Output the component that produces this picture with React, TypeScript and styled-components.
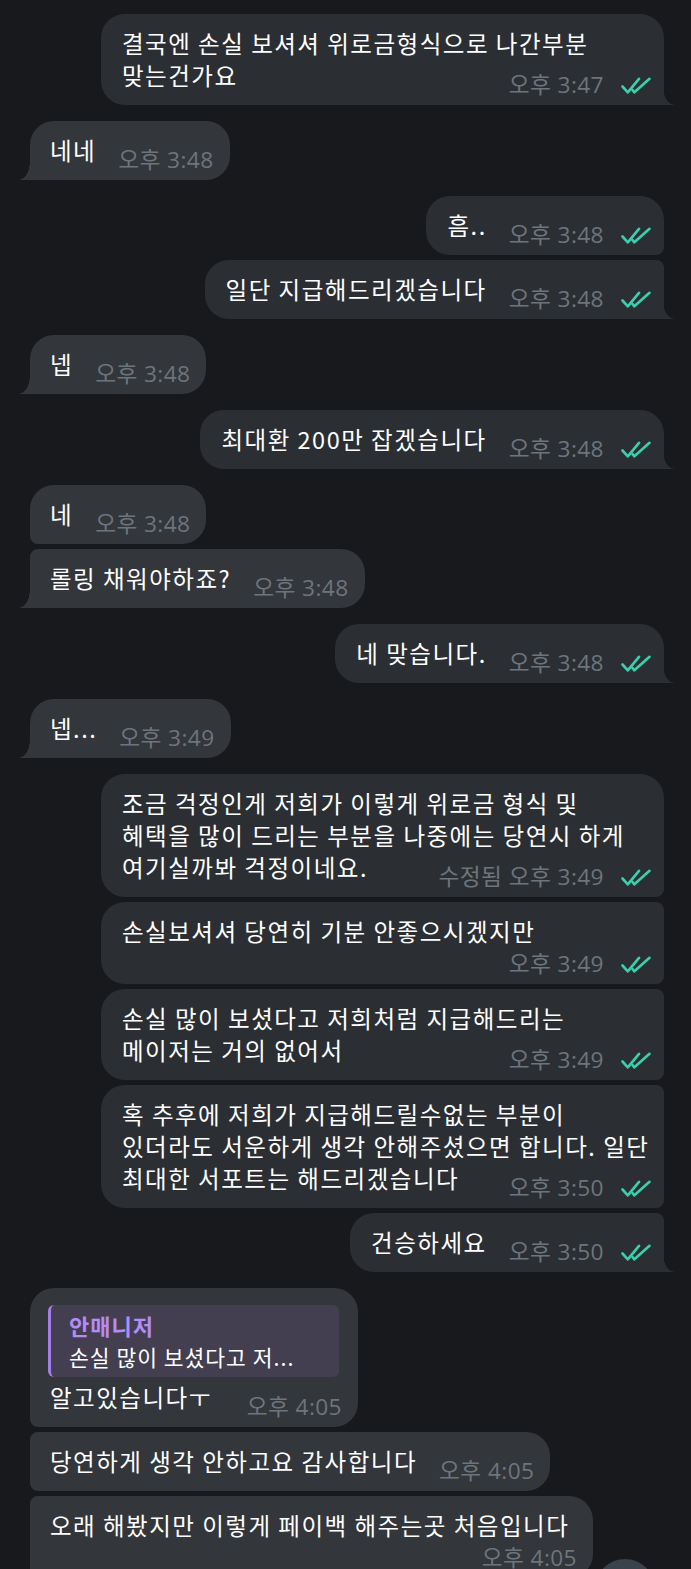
import React from "react";
import styled, { createGlobalStyle, css } from "styled-components";
import { ChevronDown } from "lucide-react";

const OUT_BG = "#2b2f33";
const IN_BG = "#33363b";
const BIG = 24;
const SMALL = 8;

const GlobalStyle = createGlobalStyle`
  html, body {
    margin: 0;
    padding: 0;
    background: #18191d;
    overflow: hidden;
  }
  body {
    font-family: "Noto Sans CJK KR", "Open Sans", sans-serif;
  }
`;

const Screen = styled.main`
  display: flex;
  flex-direction: column;
  gap: 16px;
  box-sizing: border-box;
  height: 1569px;
  overflow: hidden;
  padding: 14px 27px 0 30px;
`;

const Group = styled.section<{ $out: boolean }>`
  display: flex;
  flex-direction: column;
  gap: 5px;
  align-items: ${(p) => (p.$out ? "flex-end" : "flex-start")};
`;

type BubbleProps = {
  $out: boolean;
  $first: boolean;
  $last: boolean;
  $wide?: boolean;
  $w?: number;
};

const Bubble = styled.div<BubbleProps>`
  position: relative;
  display: flow-root;
  box-sizing: border-box;
  max-width: 563px;
  ${(p) => p.$wide && css`width: 563px;`}
  ${(p) => p.$w && css`width: ${p.$w}px;`}
  background: ${(p) => (p.$out ? OUT_BG : IN_BG)};
  padding: ${(p) => (p.$out ? "13px 13px 6px 21px" : "13px 16px 6px 20px")};
  border-radius: ${(p) =>
    p.$out
      ? `${BIG}px ${p.$first ? BIG : SMALL}px ${p.$last ? 0 : SMALL}px ${BIG}px`
      : `${p.$first ? BIG : SMALL}px ${BIG}px ${BIG}px ${p.$last ? 0 : SMALL}px`};
  color: #ffffff;
  font-family: "Noto Sans CJK KR", sans-serif;
  font-size: 23.5px;
  line-height: 32px;
  letter-spacing: 1.5px;
  word-spacing: 0;

  ${(p) =>
    p.$last &&
    css`
      &::after {
        content: "";
        position: absolute;
        bottom: 0;
        width: 11px;
        height: 18px;
        background: ${p.$out ? OUT_BG : IN_BG};
        ${p.$out
          ? css`
              right: -10px;
              -webkit-mask-image: radial-gradient(ellipse 11px 18px at 100% 0, transparent 96%, #000 100%);
              mask-image: radial-gradient(ellipse 11px 18px at 100% 0, transparent 96%, #000 100%);
            `
          : css`
              left: -11px;
              -webkit-mask-image: radial-gradient(ellipse 11px 18px at 0 0, transparent 96%, #000 100%);
              mask-image: radial-gradient(ellipse 11px 18px at 0 0, transparent 96%, #000 100%);
            `}
      }
    `}
`;

const Meta = styled.span<{ $below?: boolean }>`
  float: right;
  display: flex;
  align-items: center;
  gap: 17px;
  margin: ${(p) => (p.$below ? "3px 0 0 22px" : "12px 0 0 22px")};
  font-family: "Open Sans", "Noto Sans CJK KR", sans-serif;
  font-size: 22.7px;
  line-height: 28px;
  letter-spacing: 0.4px;
  word-spacing: 0;
  color: #6c757e;
  white-space: nowrap;
`;

const CheckSvg = styled.svg`
  flex-shrink: 0;
  fill: none;
  stroke: #3ccfae;
  stroke-width: 2.6;
  stroke-linecap: round;
  stroke-linejoin: round;
`;

const Quote = styled.div`
  contain: inline-size;
  margin: 4px 3px 4px -2px;
  padding: 5px 12px 5px 18px;
  border-left: 3px solid #a47fe8;
  border-radius: 6px;
  background: #433f51;
  line-height: 31px;
  letter-spacing: 1px;
`;

const QuoteName = styled.div`
  color: #b48cf2;
  font-weight: 700;
  font-size: 22px;
`;

const QuoteText = styled.div`
  font-size: 21.5px;
  color: #ffffff;
  white-space: nowrap;
  overflow: hidden;
  text-overflow: ellipsis;
`;

const ScrollDown = styled.button`
  position: fixed;
  right: 36px;
  bottom: -50px;
  width: 60px;
  height: 60px;
  border: none;
  border-radius: 50%;
  background: #3a424b;
  color: #aeb6bf;
  display: flex;
  align-items: center;
  justify-content: center;
  padding: 0;
`;

const Checks = () => (
  <CheckSvg width="30" height="17" viewBox="0 0 30 17">
    <path d="M1.5 9.5 L6.8 15.3 L18 1.8" />
    <path d="M11.6 13.2 L13.4 15.3 L28.5 1.8" />
  </CheckSvg>
);

type Msg = {
  lines: string[];
  time: string;
  edited?: boolean;
  below?: boolean;
  reply?: { name: string; text: string };
  w?: number;
};

type Grp = { out: boolean; msgs: Msg[] };

const groups: Grp[] = [
  {
    out: true,
    msgs: [{ lines: ["결국엔 손실 보셔셔 위로금형식으로 나간부분", "맞는건가요"], time: "오후 3:47" }],
  },
  { out: false, msgs: [{ lines: ["네네"], time: "오후 3:48" }] },
  {
    out: true,
    msgs: [
      { lines: ["흠.."], time: "오후 3:48" },
      { lines: ["일단 지급해드리겠습니다"], time: "오후 3:48" },
    ],
  },
  { out: false, msgs: [{ lines: ["넵"], time: "오후 3:48" }] },
  { out: true, msgs: [{ lines: ["최대환 200만 잡겠습니다"], time: "오후 3:48" }] },
  {
    out: false,
    msgs: [
      { lines: ["네"], time: "오후 3:48" },
      { lines: ["롤링 채워야하죠?"], time: "오후 3:48" },
    ],
  },
  { out: true, msgs: [{ lines: ["네 맞습니다."], time: "오후 3:48" }] },
  { out: false, msgs: [{ lines: ["넵..."], time: "오후 3:49" }] },
  {
    out: true,
    msgs: [
      {
        lines: [
          "조금 걱정인게 저희가 이렇게 위로금 형식 및",
          "혜택을 많이 드리는 부분을 나중에는 당연시 하게",
          "여기실까봐 걱정이네요.",
        ],
        time: "오후 3:49",
        edited: true,
      },
      { lines: ["손실보셔셔 당연히 기분 안좋으시겠지만"], time: "오후 3:49", below: true },
      {
        lines: ["손실 많이 보셨다고 저희처럼 지급해드리는", "메이저는 거의 없어서"],
        time: "오후 3:49",
      },
      {
        lines: [
          "혹 추후에 저희가 지급해드릴수없는 부분이",
          "있더라도 서운하게 생각 안해주셨으면 합니다. 일단",
          "최대한 서포트는 해드리겠습니다",
        ],
        time: "오후 3:50",
      },
      { lines: ["건승하세요"], time: "오후 3:50" },
    ],
  },
  {
    out: false,
    msgs: [
      {
        lines: ["알고있습니다ㅜ"],
        time: "오후 4:05",
        reply: { name: "안매니저", text: "손실 많이 보셨다고 저..." },
        w: 328,
      },
      { lines: ["당연하게 생각 안하고요 감사합니다"], time: "오후 4:05" },
      { lines: ["오래 해봤지만 이렇게 페이백 해주는곳 처음입니다"], time: "오후 4:05", below: true },
    ],
  },
];

export default function App() {
  return (
    <>
      <GlobalStyle />
      <Screen>
        {groups.map((g, gi) => (
          <Group key={gi} $out={g.out}>
            {g.msgs.map((m, mi) => (
              <Bubble
                key={mi}
                $out={g.out}
                $first={mi === 0}
                $last={mi === g.msgs.length - 1 && !(gi === groups.length - 1)}
                $wide={m.lines.length > 1 || m.below}
                $w={m.w}
              >
                {m.reply && (
                  <Quote>
                    <QuoteName>{m.reply.name}</QuoteName>
                    <QuoteText>{m.reply.text}</QuoteText>
                  </Quote>
                )}
                {m.lines.map((l, li) => (
                  <React.Fragment key={li}>
                    {li > 0 && <br />}
                    {l}
                  </React.Fragment>
                ))}
                <Meta $below={m.below}>
                  <span>{m.edited ? `수정됨 ${m.time}` : m.time}</span>
                  {g.out && <Checks />}
                </Meta>
              </Bubble>
            ))}
          </Group>
        ))}
      </Screen>
      <ScrollDown aria-label="scroll down">
        <ChevronDown size={28} />
      </ScrollDown>
    </>
  );
}
